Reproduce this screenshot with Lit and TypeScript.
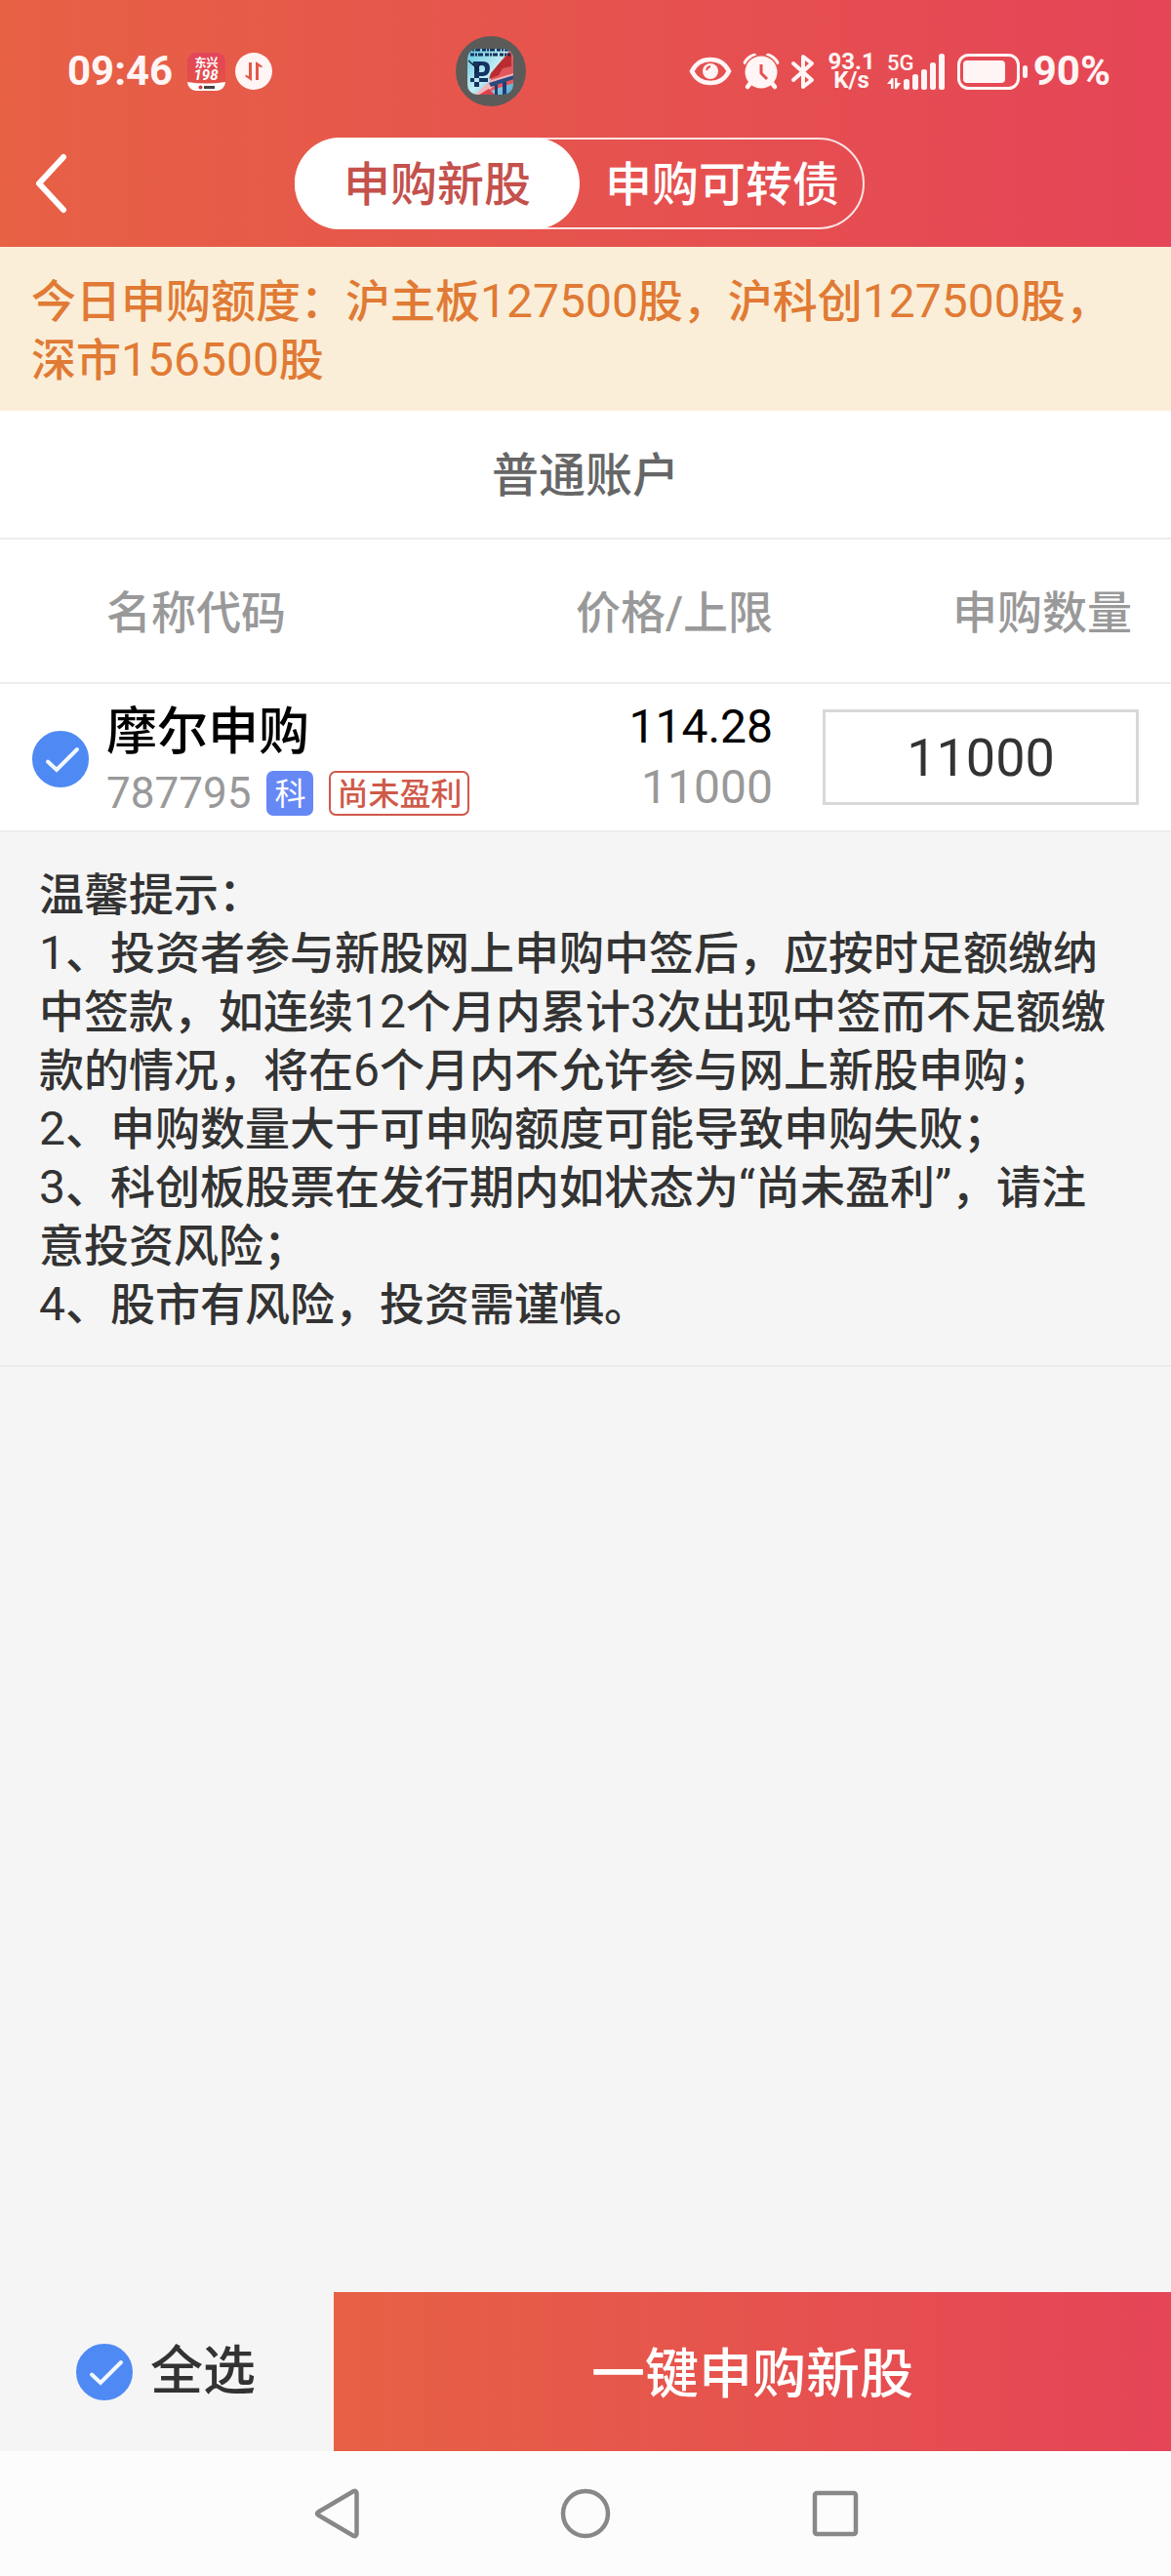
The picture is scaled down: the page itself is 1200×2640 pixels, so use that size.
import { LitElement, html, css, svg } from "lit";
import { customElement, property, state } from "lit/decorators.js";

interface Offer {
  name: string;
  code: string;
  board: string;
  tag: string;
  price: string;
  limit: string;
  quantity: string;
  selected: boolean;
}

const QUOTA = "今日申购额度：沪主板127500股，沪科创127500股，深市156500股";

const TIPS = [
  "温馨提示：",
  "1、投资者参与新股网上申购中签后，应按时足额缴纳中签款，如连续12个月内累计3次出现中签而不足额缴款的情况，将在6个月内不允许参与网上新股申购；",
  "2、申购数量大于可申购额度可能导致申购失败；",
  "3、科创板股票在发行期内如状态为“尚未盈利”，请注意投资风险；",
  "4、股市有风险，投资需谨慎。",
];

// Latin digits are set a little larger than the Chinese text around them.
const mixed = (text: string) =>
  text
    .split(/([0-9]+|[“”])/)
    .map((part) => (/^[0-9“”]/.test(part) ? html`<span class="num">${part}</span>` : part));

@customElement("round-check")
export class RoundCheck extends LitElement {
  @property({ type: Boolean }) checked = false;
  @property() label = "";
  @property() text = "";

  static styles = css`
    :host {
      display: inline-block;
      vertical-align: middle;
    }
    .wrap {
      display: flex;
      align-items: center;
      gap: 18px;
      font: 500 54px/60px Roboto, "Noto Sans CJK SC", sans-serif;
      color: #333;
      cursor: pointer;
    }
    .mark {
      display: grid;
      width: 58px;
      height: 58px;
    }
    .box,
    .tick {
      grid-area: 1 / 1;
      width: 58px;
      height: 58px;
    }
    .box {
      appearance: none;
      margin: 0;
      border: 3px solid #c8c8c8;
      border-radius: 50%;
      background: #fff;
    }
    .box:checked {
      border-color: #4f8af4;
      background: #4f8af4;
    }
    .tick {
      pointer-events: none;
    }
  `;

  private toggle(e: Event) {
    this.checked = (e.target as HTMLInputElement).checked;
    this.dispatchEvent(new CustomEvent("toggle", { detail: this.checked }));
  }

  render() {
    return html`<label class="wrap">
      <span class="mark">
        <input
          class="box"
          type="checkbox"
          aria-label=${this.label}
          .checked=${this.checked}
          @change=${this.toggle}
        />
        <svg class="tick" viewBox="0 0 58 58" fill="none" aria-hidden="true">
          <path d="M16 31.5 25 40 46 19" stroke="#f2f8ff" stroke-width="4" stroke-linecap="round" stroke-linejoin="miter" />
        </svg>
      </span>
      ${this.text ? html`<span>${this.text}</span>` : ""}
    </label>`;
  }
}

@customElement("status-bar")
export class StatusBar extends LitElement {
  static styles = css`
    :host {
      display: flex;
      align-items: center;
      padding: 37px 62px 32px 0;
      color: #fff5f4;
      font-family: Roboto, "Noto Sans CJK SC", sans-serif;
      font-weight: 700;
    }
    svg {
      display: block;
      flex: none;
      overflow: visible;
    }
    .left {
      display: flex;
      align-items: center;
      gap: 10px;
      box-sizing: border-box;
      width: 41%;
      padding-left: 69px;
    }
    .right {
      display: flex;
      align-items: center;
      gap: 12px;
      margin-left: auto;
    }
    .big {
      font-size: 42px;
      line-height: 48px;
    }
    .left .big {
      margin-right: 5px;
    }
    .speed {
      font-size: 24px;
      line-height: 19px;
      text-align: center;
    }
    .power {
      display: flex;
      align-items: center;
      gap: 6px;
    }
  `;

  render() {
    return html`
      <div class="left">
        <span class="big">09:46</span>
        <svg width="39" height="39" viewBox="0 0 39 39" aria-hidden="true">
          <defs>
            <linearGradient id="app" x1="0" y1="0" x2="0" y2="1">
              <stop offset="0" stop-color="#e2455c" />
              <stop offset="1" stop-color="#e4523f" />
            </linearGradient>
            <clipPath id="appclip"><rect width="39" height="39" rx="9" /></clipPath>
          </defs>
          <g clip-path="url(#appclip)">
            <rect width="39" height="39" fill="url(#app)" />
            <path d="M0 30Q19.5 33 39 30V39H0Z" fill="#fff" />
            <text x="19.5" y="14.5" font-size="12" text-anchor="middle" fill="#fff">东兴</text>
            <text x="19" y="28" font-size="15" font-style="italic" text-anchor="middle" fill="#fff">198</text>
            <circle cx="13.5" cy="35.5" r="2" fill="#d33a3a" />
            <rect x="17" y="34" width="11" height="3" fill="#444" />
          </g>
        </svg>
        <svg width="38" height="38" viewBox="0 0 38 38" aria-hidden="true">
          <circle cx="19" cy="19" r="19" fill="#fff5f4" />
          <path d="M14 10H17V29L10.5 24.5V22.5L14 24Z" fill="#e4584b" />
          <path d="M24 28H21V9L27.5 13.5V15.5L24 14Z" fill="#e4584b" />
        </svg>
      </div>
      <svg width="72" height="72" viewBox="0 0 72 72" aria-hidden="true">
        <defs>
          <clipPath id="art"><rect x="12" y="13" width="47" height="47" rx="10" /></clipPath>
          <linearGradient id="sky" x1="0" y1="0" x2="1" y2="1">
            <stop offset="0" stop-color="#5cc4de" />
            <stop offset="0.5" stop-color="#c3edf3" />
            <stop offset="1" stop-color="#4ea4cc" />
          </linearGradient>
        </defs>
        <circle cx="36" cy="36" r="36" fill="#5b5b59" />
        <g clip-path="url(#art)">
          <rect x="12" y="13" width="47" height="47" fill="url(#sky)" />
          <path d="M60 12V48L24 60 34 48 40 36 52 18Z" fill="#e2575c" />
          <path d="M36 38 47 25 57 17V31L48 33 44 40 34 44Z" fill="#b92d30" />
          <path d="M20 60 36 45 60 38V42L40 50 30 60Z" fill="#f4b3b8" />
          <path d="M34 48 60 40V44L36 52Z" fill="#274a80" />
          <path d="M40 50H43V60H40ZM48 47H52V60H48Z" fill="#1f3f74" />
          <path d="M24 60 34 54 40 60Z" fill="#d9434e" />
          <path
            d="M18 26H28Q35 26 35 33T28 41H24V52H19V30H17ZM24 30V37H27Q30 37 30 33.5T27 30ZM15 43H33V47H15Z"
            fill="#143463"
            fill-rule="evenodd"
          />
          <path d="M13 25 24 35M25 28 20 38" stroke="#10243d" stroke-width="1.5" />
          <path d="M12 14H58M15 19H56" stroke="#17305a" stroke-width="3" stroke-dasharray="4 1 2 1 5 2" />
        </g>
      </svg>
      <div class="right">
        <svg width="44" height="30" viewBox="0 0 44 30" fill="none" aria-hidden="true">
          <path d="M3 15C7 7 14 3 22 3S37 7 41 15C37 23 30 27 22 27S7 23 3 15Z" stroke="#fff5f4" stroke-width="4.5" />
          <circle cx="22" cy="15" r="8" fill="#fff5f4" />
          <path d="M18 14Q18.5 11 22 10" stroke="#e5504f" stroke-width="2" />
        </svg>
        <svg width="36" height="36" viewBox="0 0 36 36" aria-hidden="true">
          <path d="M2 9A17 17 0 0 1 11 2M25 2A17 17 0 0 1 34 9" stroke="#fff5f4" stroke-width="4.5" fill="none" stroke-linecap="round" />
          <circle cx="18" cy="19" r="18" fill="#e5504f" />
          <path d="M8 29 4 34M28 29 32 34" stroke="#fff5f4" stroke-width="4.5" stroke-linecap="round" />
          <circle cx="18" cy="19" r="16.5" fill="#fff5f4" />
          <path d="M18 11V20L24 26" stroke="#e5504f" stroke-width="3" fill="none" />
        </svg>
        <svg width="26" height="37" viewBox="0 0 26 37" fill="none" aria-hidden="true">
          <path d="M3 10 22 27 13 34V3L22 10 3 27" stroke="#fff5f4" stroke-width="4" stroke-linejoin="round" stroke-linecap="round" />
        </svg>
        <div class="speed">93.1<br />K/s</div>
        <svg width="60" height="37" viewBox="0 0 60 37" fill="#fff5f4" aria-label="5G">
          <text x="0" y="17" font-size="22" font-weight="500">5G</text>
          <path d="M0 31 5 25H6.5V36H4V31ZM8 25H10.5V30L14.5 30 9.5 36H8Z" />
          ${[
            [17, 26],
            [26, 21],
            [35, 16],
            [44, 9],
            [53, 0],
          ].map(([x, y]) => svg`<rect x=${x} y=${y} width="6" height=${37 - y} rx="2.5" />`)}
        </svg>
        <div class="power">
          <svg width="72" height="37" viewBox="0 0 72 37" aria-hidden="true">
            <rect x="1.5" y="1.5" width="61" height="34" rx="10" fill="none" stroke="#fff5f4" stroke-width="3" />
            <rect x="6" y="7" width="43" height="23" rx="4" fill="#fff5f4" />
            <rect x="67" y="12" width="5" height="13" rx="2.5" fill="#fff5f4" />
          </svg>
          <span class="big">90%</span>
        </div>
      </div>
    `;
  }
}

@customElement("app-root")
export class AppRoot extends LitElement {
  @state() private tab = 0;
  @state() private offers: Offer[] = [
    {
      name: "摩尔申购",
      code: "787795",
      board: "科",
      tag: "尚未盈利",
      price: "114.28",
      limit: "11000",
      quantity: "11000",
      selected: true,
    },
  ];

  static styles = css`
    :host {
      display: flex;
      flex-direction: column;
      min-height: 100vh;
      background: #f5f5f5;
      color: #333;
      font-family: Roboto, "Noto Sans CJK SC", sans-serif;
      font-size: 46px;
      font-weight: 500;
      line-height: 60px;
    }
    button,
    input {
      font-family: inherit;
    }
    button {
      margin: 0;
      padding: 0;
      border: 0;
      background: none;
      cursor: pointer;
    }
    svg {
      display: block;
    }
    .num {
      font-size: 48px;
      font-weight: 400;
    }
    .top {
      background: linear-gradient(90deg, #e76145, #e54557);
    }
    .titlebar {
      display: grid;
      grid-template-columns: 1fr auto 1fr;
      align-items: center;
      padding: 0 12px 18px 0;
    }
    .back {
      width: 104px;
      height: 94px;
      padding-left: 32px;
    }
    .tabs {
      display: flex;
      box-sizing: border-box;
      height: 94px;
      border: 2px solid #fbe3e2;
      border-radius: 47px;
    }
    .tab {
      width: 292px;
      margin: -2px;
      padding-top: 4px;
      border-radius: 47px;
      color: #fff;
      font-size: 48px;
      line-height: 60px;
      font-weight: 500;
    }
    .tab + .tab {
      margin-left: 2px;
    }
    .tab.on {
      background: #fff;
      color: #c4514c;
    }
    .notice {
      padding: 26px 32px 22px;
      background: #fbeed8;
      color: #e07a34;
    }
    .account {
      padding: 37px 0 33px;
      border-bottom: 2px solid #ededed;
      background: #fff;
      color: #666;
      font-size: 48px;
      font-weight: 500;
      text-align: center;
      margin: 0;
    }
    .offers {
      width: 100%;
      table-layout: fixed;
      border-spacing: 0;
      background: #fff;
    }
    .offers th,
    .offers td {
      box-sizing: border-box;
      padding: 0;
      border-bottom: 2px solid #ededed;
    }
    .offers th {
      height: 148px;
      padding-top: 4px;
      color: #999;
      font-weight: 500;
      text-align: left;
    }
    .offers td {
      height: 152px;
    }
    .c-check {
      width: 109px;
    }
    .c-price {
      width: 22%;
    }
    .c-qty {
      width: 34%;
    }
    .offers .end {
      text-align: right;
    }
    .offers .qty-head {
      padding-right: 40px;
      text-align: right;
    }
    .offers .pick {
      padding-left: 33px;
    }
    .offers .stock {
      padding-top: 12px;
    }
    .name,
    .meta,
    .price,
    .limit {
      line-height: 62px;
    }
    .name {
      color: #000;
      font-size: 52px;
    }
    .meta {
      display: flex;
      align-items: center;
      color: #999;
      font-size: 44px;
      font-weight: 400;
    }
    .badge {
      box-sizing: border-box;
      height: 46px;
      border: 2px solid #cf5a4a;
      border-radius: 7px;
      color: #cf5a4a;
      font-size: 32px;
      font-weight: 500;
      line-height: 44px;
      padding: 0 6px;
      margin-left: 16px;
    }
    .badge.board {
      border-color: #6688f4;
      background: #6688f4;
      color: #fff;
      font-weight: 400;
    }
    .price {
      color: #000;
      font-size: 48px;
      font-weight: 400;
    }
    .limit {
      color: #999;
      font-size: 48px;
      font-weight: 400;
    }
    .offers .qty-cell {
      padding: 0 33px 0 51px;
    }
    .qty {
      display: block;
      box-sizing: border-box;
      width: 100%;
      height: 98px;
      margin: 0;
      padding: 0;
      border: 3px solid #d8d8d8;
      border-radius: 0;
      background: #fff;
      color: #333;
      font-size: 54px;
      text-align: center;
    }
    .tips {
      padding: 34px 48px 32px 40px;
      border-bottom: 2px solid #ebebeb;
    }
    .tips p {
      margin: 0;
    }
    .actions {
      display: flex;
      margin-top: auto;
      height: 163px;
    }
    .all {
      display: flex;
      align-items: center;
      box-sizing: border-box;
      width: 28.5%;
      padding-left: 78px;
    }
    .submit {
      flex: 1;
      padding-top: 4px;
      background: linear-gradient(90deg, #e76145, #e54557);
      color: #fff;
      font-size: 55px;
      line-height: 60px;
      font-weight: 500;
    }
    .nav {
      display: flex;
      justify-content: center;
      height: 128px;
      background: #fcfcfc;
    }
    .nav button {
      display: grid;
      place-items: center;
      width: 256px;
    }
  `;

  private setAll(on: boolean) {
    this.offers = this.offers.map((o) => ({ ...o, selected: on }));
  }

  private setOne(index: number, on: boolean) {
    this.offers = this.offers.map((o, i) => (i === index ? { ...o, selected: on } : o));
  }

  private row(o: Offer, i: number) {
    return html`<tr>
      <td class="pick">
        <round-check
          label=${`选择${o.name}`}
          .checked=${o.selected}
          @toggle=${(e: CustomEvent) => this.setOne(i, e.detail)}
        ></round-check>
      </td>
      <td class="stock">
        <div class="name">${o.name}</div>
        <div class="meta">
          <span>${o.code}</span>
          <span class="badge board">${o.board}</span>
          <span class="badge">${o.tag}</span>
        </div>
      </td>
      <td class="end">
        <div class="price">${o.price}</div>
        <div class="limit">${o.limit}</div>
      </td>
      <td class="qty-cell">
        <input class="qty" type="text" inputmode="numeric" aria-label="申购数量" .value=${o.quantity} />
      </td>
    </tr>`;
  }

  render() {
    return html`
      <header class="top">
        <status-bar></status-bar>
        <div class="titlebar">
          <button class="back" aria-label="返回">
            <svg width="40" height="64" viewBox="0 0 40 64" fill="none">
              <path d="M33 5 8 32 33 59" stroke="#fff" stroke-width="6" stroke-linecap="round" stroke-linejoin="round" />
            </svg>
          </button>
          <div class="tabs">
            ${["申购新股", "申购可转债"].map(
              (t, i) => html`<button
                class=${this.tab === i ? "tab on" : "tab"}
                aria-pressed=${this.tab === i}
                @click=${() => (this.tab = i)}
              >
                ${t}
              </button>`
            )}
          </div>
        </div>
      </header>
      <div class="notice">${mixed(QUOTA)}</div>
      <h1 class="account">普通账户</h1>
      <table class="offers">
        <colgroup>
          <col class="c-check" />
          <col />
          <col class="c-price" />
          <col class="c-qty" />
        </colgroup>
        <thead>
          <tr>
            <th></th>
            <th>名称代码</th>
            <th class="end">价格/上限</th>
            <th class="qty-head">申购数量</th>
          </tr>
        </thead>
        <tbody>
          ${this.offers.map((o, i) => this.row(o, i))}
        </tbody>
      </table>
      <section class="tips">${TIPS.map((t) => html`<p>${mixed(t)}</p>`)}</section>
      <div class="actions">
        <div class="all">
          <round-check
            label="全选"
            text="全选"
            .checked=${this.offers.every((o) => o.selected)}
            @toggle=${(e: CustomEvent) => this.setAll(e.detail)}
          ></round-check>
        </div>
        <button class="submit">一键申购新股</button>
      </div>
      <nav class="nav">
        <button aria-label="返回">
          <svg width="52" height="52" viewBox="0 0 52 52" fill="none" stroke="#888" stroke-width="4.5" stroke-linejoin="round">
            <path d="M47.5 5V47Q47 50 44.500 49L8 27.500Q6 26 8 24.500L44.500 3Q47 2 47.500 5Z" />
          </svg>
        </button>
        <button aria-label="主屏幕">
          <svg width="52" height="52" viewBox="0 0 52 52" fill="none" stroke="#888" stroke-width="4.5">
            <circle cx="26" cy="26" r="23" />
          </svg>
        </button>
        <button aria-label="最近任务">
          <svg width="52" height="52" viewBox="0 0 52 52" fill="none" stroke="#888" stroke-width="4.5">
            <rect x="5" y="5" width="42" height="42" rx="2" />
          </svg>
        </button>
      </nav>
    `;
  }
}
